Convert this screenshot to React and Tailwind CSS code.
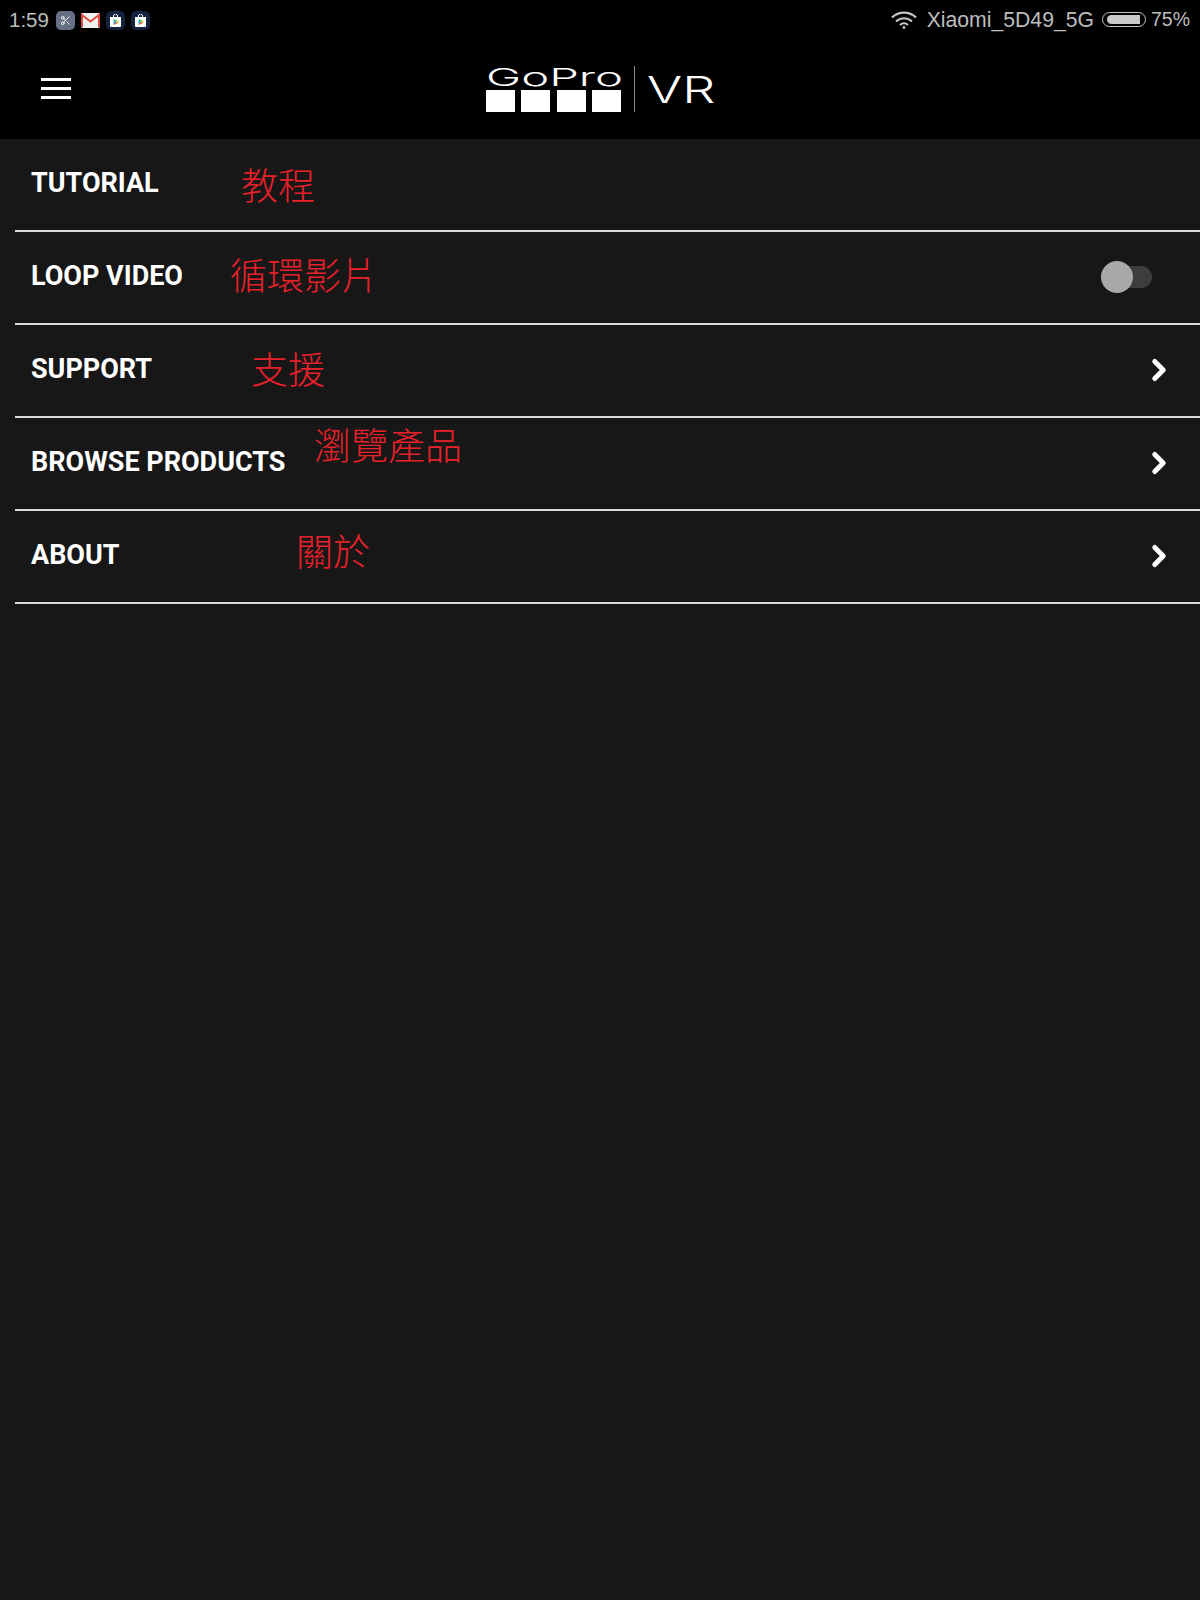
import { ChevronRight, Scissors } from "lucide-react";

const rows = [
  { label: "TUTORIAL", note: "教程", noteClass: "left-[226px] top-[23px]" },
  { label: "LOOP VIDEO", note: "循環影片", noteClass: "left-[215px] top-[20px]", toggle: true },
  { label: "SUPPORT", note: "支援", noteClass: "left-[236px] top-[21px]", arrow: true },
  { label: "BROWSE PRODUCTS", note: "瀏覽產品", noteClass: "left-[299px] top-[4px]", arrow: true },
  { label: "ABOUT", note: "關於", noteClass: "left-[281px] top-[17px]", arrow: true },
];

function PlayIcon() {
  return (
    <div className="flex h-[19px] w-[19px] items-center justify-center rounded-[5px] bg-[#14213f]">
      <svg width="13" height="13" viewBox="0 0 13 13">
        <path d="M1 3h11v9a1 1 0 0 1-1 1H2a1 1 0 0 1-1-1z" fill="#fff" />
        <path d="M4.5 3V2a2 2 0 0 1 4 0v1" fill="none" stroke="#fff" strokeWidth="1" />
        <path d="M4.5 5v6l2.5-3z" fill="#1fa8e0" />
        <path d="M4.5 5L7 8l1.5-1.2z" fill="#3bb54a" />
        <path d="M4.5 11L7 8l1.5 1.2z" fill="#e8453c" />
        <path d="M8.5 6.8L10 8 8.5 9.2 7 8z" fill="#f7c413" />
      </svg>
    </div>
  );
}

function StatusBar() {
  return (
    <div className="flex h-[40px] items-center justify-between pl-[9px] pr-[10px] text-[19.5px] text-[#bdbdbd] [font-family:'Liberation_Sans',sans-serif]">
      <div className="flex items-center">
        <span className="mr-[8px] w-[39px] text-[20.5px]">1:59</span>
        <div className="mr-[6px] flex h-[19px] w-[19px] items-center justify-center rounded-[5px] bg-[#667085]">
          <Scissors size={11} color="#fff" />
        </div>
        <svg className="mr-[6px]" width="19" height="19" viewBox="0 0 19 19">
          <rect x="0" y="2" width="19" height="15" rx="2" fill="#f2f2f2" />
          <path d="M1 16V4l8.5 6.5L18 4v12" fill="none" stroke="#e04a3c" strokeWidth="2" />
        </svg>
        <div className="mr-[6px]"><PlayIcon /></div>
        <PlayIcon />
      </div>
      <div className="flex items-center">
        <svg className="mr-[10px]" width="26" height="18" viewBox="0 0 26 18" fill="none" stroke="#c4c4c4" strokeWidth="2.2">
          <path d="M1 6.5a17 17 0 0 1 24 0" />
          <path d="M5 10.5a11.5 11.5 0 0 1 16 0" />
          <path d="M9 14a6 6 0 0 1 8 0" />
          <circle cx="13" cy="16.5" r="1.4" fill="#c4c4c4" stroke="none" />
        </svg>
        <span className="mr-[8px] text-[21.2px]">Xiaomi_5D49_5G</span>
        <div className="mr-[5px] flex h-[15px] w-[44px] items-center rounded-full border border-[#c4c4c4] px-[2px]">
          <div className="ml-[2px] h-[9px] w-[33px] rounded-l-full rounded-r-[2px] bg-[#c9c9c9]" />
        </div>
        <span>75%</span>
      </div>
    </div>
  );
}

function Logo() {
  return (
    <div className="flex items-center">
      <div className="flex w-[136px] flex-col">
        <div className="h-[23px] origin-left scale-x-[1.97] text-[24px] leading-[22px] font-light text-white [font-family:Inter,sans-serif]">
          GoPro
        </div>
        <div className="flex justify-between">
          <div className="h-[22px] w-[29px] bg-white" />
          <div className="h-[22px] w-[29px] bg-white" />
          <div className="h-[22px] w-[29px] bg-white" />
          <div className="h-[22px] w-[29px] bg-white" />
        </div>
      </div>
      <div className="mx-[12px] h-[46px] w-px bg-[#888]" />
      <div className="w-[68px] origin-left scale-x-[1.41] text-[37px] leading-none font-light text-white [font-family:Inter,sans-serif]">
        VR
      </div>
    </div>
  );
}

function Row({ row }) {
  return (
    <div className="relative ml-[15px] flex h-[93px] items-center justify-between border-b-2 border-[#dcdcdc] pb-[2px] pl-[16px] pr-[31px]">
      <span className="text-[27px] font-bold leading-none text-white [font-family:Roboto,sans-serif]">{row.label}</span>
      <span className={`absolute text-[37px] leading-[44px] text-[#e8212a] [font-family:'Noto_Sans_CJK_TC',sans-serif] font-light ${row.noteClass}`}>
        {row.note}
      </span>
      {row.toggle && (
        <div className="relative mr-[17px] mt-[1px] h-[22px] w-[51px] rounded-full bg-[#3d3d3d]">
          <div className="absolute left-0 top-[-5px] h-[32px] w-[32px] rounded-full bg-[#a8a8a8]" />
        </div>
      )}
      {row.arrow && <ChevronRight className="mr-[-7px]" size={34} color="#fff" strokeWidth={3.5} />}
    </div>
  );
}

export default function App() {
  return (
    <div className="min-h-[1600px] w-[1200px] bg-[#171717]">
      <div className="h-[139px] bg-black">
        <StatusBar />
        <div className="relative flex h-[99px] items-center justify-center pb-[1px]">
          <div className="absolute left-[41px] top-[38px] flex w-[30px] flex-col gap-[6px]">
            <div className="h-[3px] bg-white" />
            <div className="h-[3px] bg-white" />
            <div className="h-[3px] bg-white" />
          </div>
          <Logo />
        </div>
      </div>
      {rows.map((row) => (
        <Row key={row.label} row={row} />
      ))}
    </div>
  );
}
